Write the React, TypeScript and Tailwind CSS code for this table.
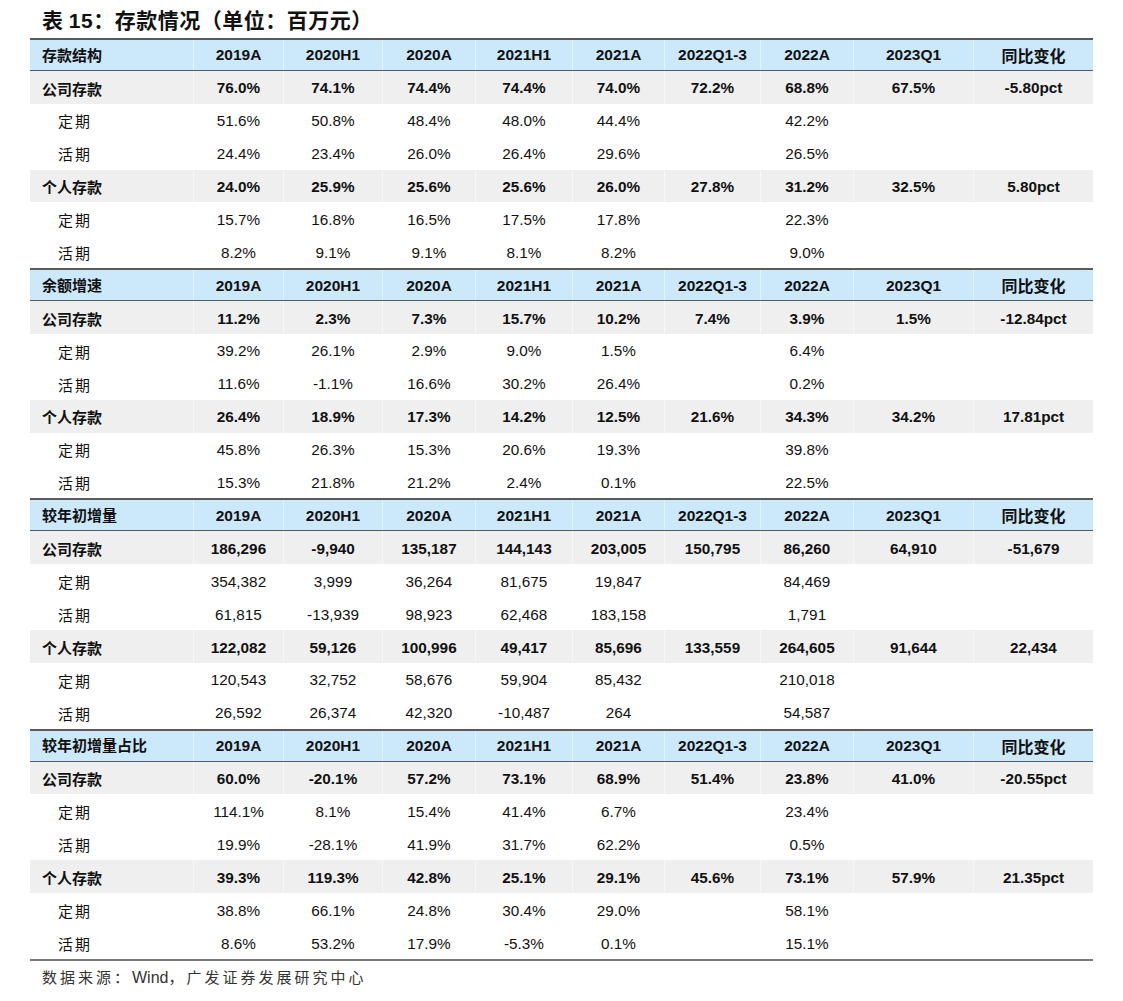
import React from "react";

type Row = { label: string; vals: string[]; kind: "main" | "sub" };
type Section = { title: string; rows: Row[] };

const cols = ["2019A", "2020H1", "2020A", "2021H1", "2021A", "2022Q1-3", "2022A", "2023Q1", "同比变化"];
const widths = ["w-[163px]", "w-[90px]", "w-[99px]", "w-[93px]", "w-[97px]", "w-[92px]", "w-[96px]", "w-[93px]", "w-[120px]", "w-[120px]"];

const sections: Section[] = [
  {
    title: "存款结构",
    rows: [
      { label: "公司存款", kind: "main", vals: ["76.0%", "74.1%", "74.4%", "74.4%", "74.0%", "72.2%", "68.8%", "67.5%", "-5.80pct"] },
      { label: "定期", kind: "sub", vals: ["51.6%", "50.8%", "48.4%", "48.0%", "44.4%", "", "42.2%", "", ""] },
      { label: "活期", kind: "sub", vals: ["24.4%", "23.4%", "26.0%", "26.4%", "29.6%", "", "26.5%", "", ""] },
      { label: "个人存款", kind: "main", vals: ["24.0%", "25.9%", "25.6%", "25.6%", "26.0%", "27.8%", "31.2%", "32.5%", "5.80pct"] },
      { label: "定期", kind: "sub", vals: ["15.7%", "16.8%", "16.5%", "17.5%", "17.8%", "", "22.3%", "", ""] },
      { label: "活期", kind: "sub", vals: ["8.2%", "9.1%", "9.1%", "8.1%", "8.2%", "", "9.0%", "", ""] },
    ],
  },
  {
    title: "余额增速",
    rows: [
      { label: "公司存款", kind: "main", vals: ["11.2%", "2.3%", "7.3%", "15.7%", "10.2%", "7.4%", "3.9%", "1.5%", "-12.84pct"] },
      { label: "定期", kind: "sub", vals: ["39.2%", "26.1%", "2.9%", "9.0%", "1.5%", "", "6.4%", "", ""] },
      { label: "活期", kind: "sub", vals: ["11.6%", "-1.1%", "16.6%", "30.2%", "26.4%", "", "0.2%", "", ""] },
      { label: "个人存款", kind: "main", vals: ["26.4%", "18.9%", "17.3%", "14.2%", "12.5%", "21.6%", "34.3%", "34.2%", "17.81pct"] },
      { label: "定期", kind: "sub", vals: ["45.8%", "26.3%", "15.3%", "20.6%", "19.3%", "", "39.8%", "", ""] },
      { label: "活期", kind: "sub", vals: ["15.3%", "21.8%", "21.2%", "2.4%", "0.1%", "", "22.5%", "", ""] },
    ],
  },
  {
    title: "较年初增量",
    rows: [
      { label: "公司存款", kind: "main", vals: ["186,296", "-9,940", "135,187", "144,143", "203,005", "150,795", "86,260", "64,910", "-51,679"] },
      { label: "定期", kind: "sub", vals: ["354,382", "3,999", "36,264", "81,675", "19,847", "", "84,469", "", ""] },
      { label: "活期", kind: "sub", vals: ["61,815", "-13,939", "98,923", "62,468", "183,158", "", "1,791", "", ""] },
      { label: "个人存款", kind: "main", vals: ["122,082", "59,126", "100,996", "49,417", "85,696", "133,559", "264,605", "91,644", "22,434"] },
      { label: "定期", kind: "sub", vals: ["120,543", "32,752", "58,676", "59,904", "85,432", "", "210,018", "", ""] },
      { label: "活期", kind: "sub", vals: ["26,592", "26,374", "42,320", "-10,487", "264", "", "54,587", "", ""] },
    ],
  },
  {
    title: "较年初增量占比",
    rows: [
      { label: "公司存款", kind: "main", vals: ["60.0%", "-20.1%", "57.2%", "73.1%", "68.9%", "51.4%", "23.8%", "41.0%", "-20.55pct"] },
      { label: "定期", kind: "sub", vals: ["114.1%", "8.1%", "15.4%", "41.4%", "6.7%", "", "23.4%", "", ""] },
      { label: "活期", kind: "sub", vals: ["19.9%", "-28.1%", "41.9%", "31.7%", "62.2%", "", "0.5%", "", ""] },
      { label: "个人存款", kind: "main", vals: ["39.3%", "119.3%", "42.8%", "25.1%", "29.1%", "45.6%", "73.1%", "57.9%", "21.35pct"] },
      { label: "定期", kind: "sub", vals: ["38.8%", "66.1%", "24.8%", "30.4%", "29.0%", "", "58.1%", "", ""] },
      { label: "活期", kind: "sub", vals: ["8.6%", "53.2%", "17.9%", "-5.3%", "0.1%", "", "15.1%", "", ""] },
    ],
  },
];

const sans = "font-['Liberation_Sans','Noto_Sans_CJK_SC',sans-serif]";
const cjk = "font-['Noto_Sans_CJK_SC',sans-serif]";

function HeaderRow({ title }: { title: string }) {
  return (
    <div className="flex h-[32.9px] bg-[#cce8fb] border-t-2 border-b-[1.5px] border-[#5a5a5a] box-border">
      <div className={`${widths[0]} shrink-0 flex items-center pl-[12px] text-[15px] font-bold text-[#111] ${cjk}`}>{title}</div>
      {cols.map((c, i) => (
        <div
          key={i}
          className={`${widths[i + 1]} shrink-0 flex items-center justify-center border-l border-[#e4f2fc] font-bold text-[#111] ${i === 8 ? cjk + " text-[16px]" : sans + " text-[15.5px]"}`}
        >
          {c}
        </div>
      ))}
    </div>
  );
}

function DataRow({ row }: { row: Row }) {
  const main = row.kind === "main";
  return (
    <div className={`flex h-[32.9px] ${main ? "bg-[#efefef]" : "bg-white"}`}>
      <div
        className={`${widths[0]} shrink-0 flex items-center pt-[3px] text-[15px] text-[#111] ${cjk} ${
          main ? "pl-[12px] font-bold" : "pl-[28px] tracking-[2px]"
        }`}
      >
        {row.label}
      </div>
      {row.vals.map((v, i) => (
        <div
          key={i}
          className={`${widths[i + 1]} shrink-0 flex items-center justify-center pt-[3px] border-l ${
            main ? "border-[#f7f7f7]" : "border-white"
          } text-[15.3px] text-[#111] ${sans} ${main ? "font-bold" : ""}`}
        >
          {v}
        </div>
      ))}
    </div>
  );
}

export default function App() {
  return (
    <div className="w-[1123px] h-[1001px] bg-white relative">
      <div className="pl-[42px] pt-[6px] h-[38px] box-border">
        <div className={`text-[21px] leading-[26px] font-bold text-[#111] tracking-[0.5px] ${cjk}`}>
          表 <span className={sans}>15</span>：存款情况（单位：百万元）
        </div>
      </div>
      <div className="ml-[30px] w-[1063px] border-b-2 border-[#7a7a7a]">
        {sections.map((s, si) => (
          <div key={si}>
            <HeaderRow title={s.title} />
            {s.rows.map((r, ri) => (
              <DataRow key={ri} row={r} />
            ))}
          </div>
        ))}
      </div>
      <div className={`pl-[42px] pt-[4px] text-[15px] leading-[24px] text-[#333] tracking-[3px] ${cjk}`}>
        数据来源：<span className={`${sans} tracking-normal text-[16px]`}>Wind</span>，广发证券发展研究中心
      </div>
    </div>
  );
}
